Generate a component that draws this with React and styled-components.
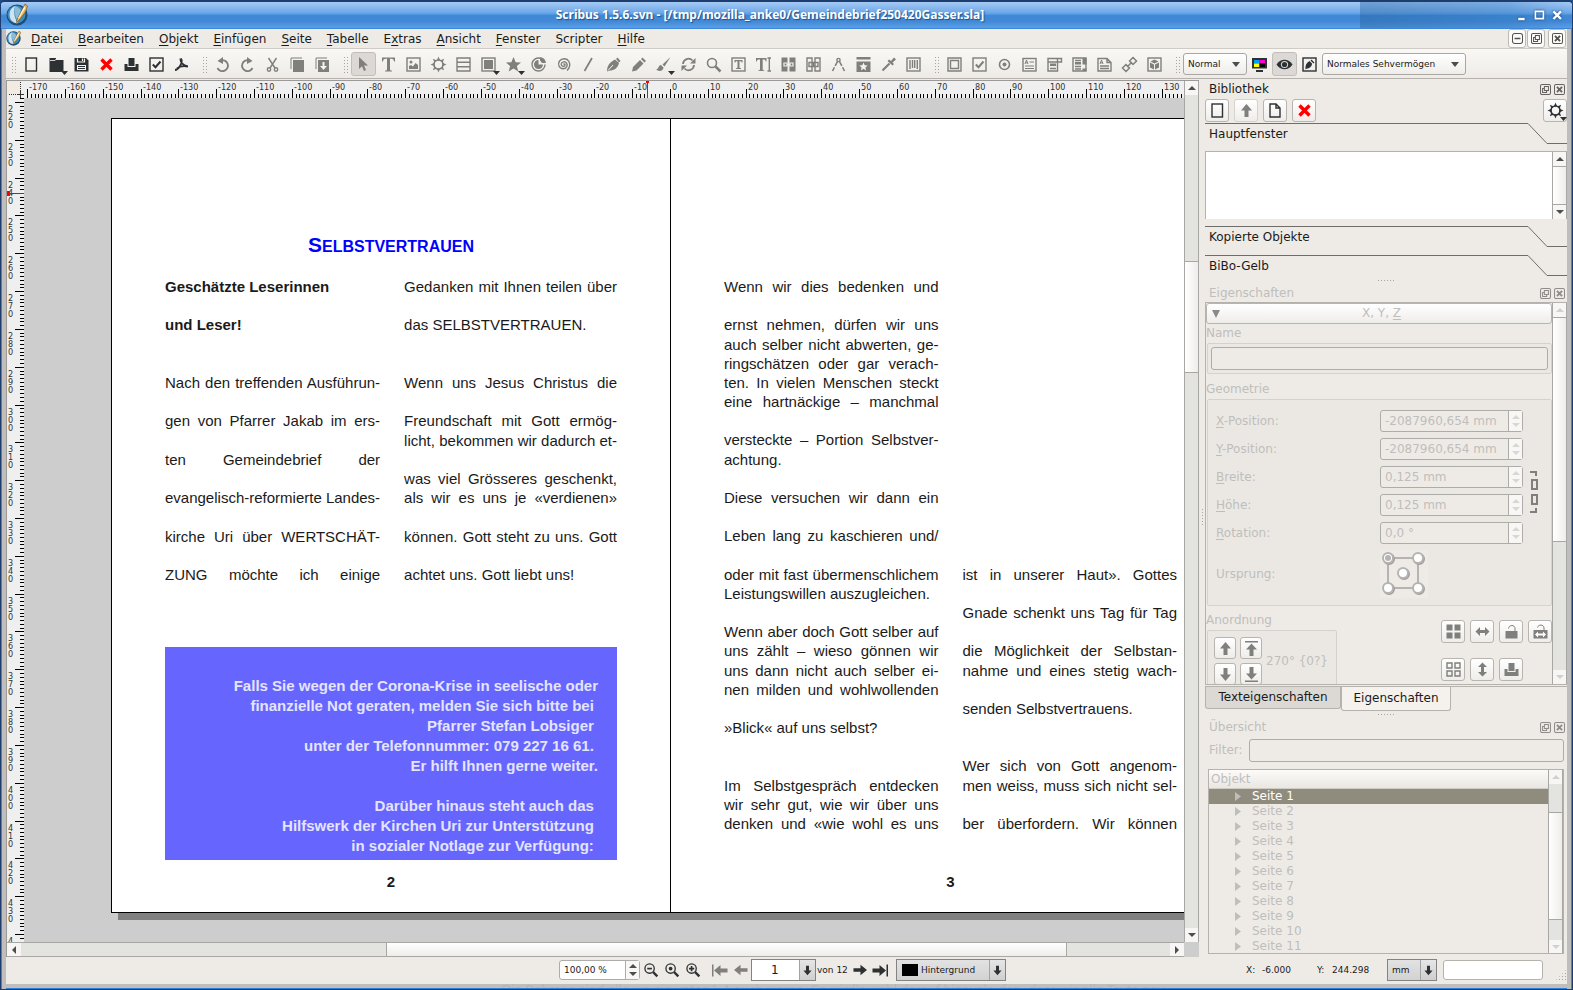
import React, { useLayoutEffect, useRef, useState } from 'react'
import styled, { createGlobalStyle, css } from 'styled-components'

const GlobalStyle = createGlobalStyle`
  * { box-sizing: border-box; }
  body { margin: 0; background: #1d4f8c; }
  button, input, select { font: inherit; color: inherit; margin: 0; padding: 0; }
  p, h1, h2, ul { margin: 0; padding: 0; font-weight: normal; }
`

/* ---------- icons ---------- */

const DARK = '#2e3133'
const GRAY = '#7f7f7c'

const s = { fill: 'none', stroke: 'currentColor', strokeWidth: 1.4 }
const f = { fill: 'currentColor', stroke: 'none' }
const w = { fill: 'none', stroke: '#f5f3f0', strokeWidth: 1.2 }

const gearTeeth = [0, 45, 90, 135, 180, 225, 270, 315].map(a => (
  <path key={a} {...f} d="M5.8 3.500 7.500-.500 9.200 3.500z" transform={`rotate(${a} 7.5 7.5)`} />
))

const SHAPES = {
  doc: <rect x="2" y="1" width="10.500" height="13" {...s} />,
  page: <path {...s} d="M2 1h6l4 4v9H2zM8 1v4h4" />,
  folder: <><path {...f} d="M0.500 1h6.500v2h7.500v12H0.500z" /><path {...w} strokeWidth=".8" d="M1 3.500h5l1-1.500M8 1.500h5.500" /></>,
  save: <><path {...f} d="M0.500 1h11.500l2.500 2.500V14.500H0.500z" /><path {...w} d="M3.500 1.500v3.500h7V1.500M8.500 1.500V4" /><path fill="#f5f3f0" d="M3 8h9v5H3z" /><path {...s} strokeWidth="1" d="M4 9.500h7M4 11.500h7" /></>,
  cross: <path fill="none" stroke="#fe0000" strokeWidth="3.4" d="m2.500 2.500 10 10m0-10-10 10" />,
  print: <path {...f} d="M4.500 1h6v8h-6zM0.500 7h3v3h8V7h3v7h-14z" />,
  check: <><rect x="1" y="1" width="13" height="13" {...s} /><path {...s} strokeWidth="2" d="m3.800 7.500 2.700 2.700 5-5.700" /></>,
  pdf: <path {...s} strokeWidth="1.8" d="M7 1.500c1.500 2 .5 5-1 7.500S2.500 13 1 13M6.500 1.500c-.5 3 2 7.500 7.500 7.800M3 11.500c2-1.700 6-2.700 10.500-2" />,
  undo: <><path {...s} strokeWidth="1.800" d="M2.500 11a5.500 5.500 0 1 0 3-7.500" /><path {...f} d="M8 0v7L2.500 4z" /></>,
  redo: <><path {...s} strokeWidth="1.800" d="M12.500 11a5.500 5.500 0 1 1-3-7.500" /><path {...f} d="M7 0v7l5.500-3z" /></>,
  cut: <><path {...s} d="M3.500 1 10 11M11.500 1 5 11" /><circle cx="4" cy="12.500" r="1.700" {...s} /><circle cx="11" cy="12.500" r="1.700" {...s} /></>,
  copy: <><path {...s} strokeWidth="1" d="M1 12V1H12" /><path {...f} d="M3 3h11v12H3z" /></>,
  paste: <><path {...s} strokeWidth="1" d="M1 12V1H12" /><path {...f} d="M3 3h11v12H3z" /><path fill="#f5f3f0" d="M7.500 5h2v4h2.500l-3.500 4-3.500-4h2.500z" /></>,
  arrow: <path {...f} d="M3 0v12l3-2.700L8 14l2-1-2-4.500h4z" />,
  text: <path {...f} d="M1 0.500h13V4.500h-1c-.3-2-1-2.700-3-2.700H9V12c0 1.200.4 1.500 2 1.700v.8H4v-.8c1.600-.2 2-.5 2-1.700V1.800H5c-2 0-2.700.7-3 2.700H1z" />,
  image: <><rect x="1" y="1" width="13" height="13" {...s} /><circle cx="5" cy="5" r="1.500" {...f} /><path {...f} d="M3 12V9l2-1 2 1.500L9.500 6 12 8v4z" /></>,
  gear: <><circle cx="7.500" cy="7.500" r="4.500" {...s} strokeWidth="1.600" />{gearTeeth}</>,
  table: <path {...s} d="M1 1h13v13H1zM1 5.300h13M1 9.700h13" />,
  shape: <><rect x="1" y="1" width="13" height="13" {...s} /><path {...f} d="M3 3h9v9H3z" /></>,
  star: <path {...f} d="m7.500 0 2.200 5.200 5.300.3-4.100 3.500 1.400 5.500-4.800-3-4.800 3L4.100 9 0 5.500l5.300-.3z" />,
  arc: <><path {...s} d="M9 1.200a6.500 6.500 0 1 0 5 6.300" /><path {...f} d="M7.500 3v4.500H12A4.500 4.500 0 1 1 7.500 3zM9 0a7 7 0 0 1 6 6H11L9 3.500z" /></>,
  spiral: <path {...s} d="M7.500 7.500c1-1.200 2 .2 1.300 1.200-1.200 1.500-3.800.3-3.600-1.500C5.500 4.500 9 4 10.500 6c1.800 2.700-.3 5.700-3.300 5.700C3 11.500 1.500 7 3.500 4 6 .8 11 1 13 4.500c1.300 3 .7 6.500-2 9" />,
  line: <path {...s} strokeWidth="1.700" d="M3.500 14 11 1" />,
  pen: <><path {...f} d="M1 14.500c0-5 2-9 8-12l4 3.500c-1 5-5 7.500-9 7.500zM10 2l1.500-1.500L14.500 4 13 5.500z" /><path {...w} strokeWidth="1" d="m2 13.500 5-5.500" /></>,
  pencil: <><path {...f} d="M1 14.500 2 10l7-7 3.500 3.500-7 7zM10 2l1.500-1.500L15 4l-1.500 1.500z" /></>,
  brush: <><path {...f} d="M0 12.500C3 12 2 8.500 5 8l2.500 2.500C7.500 14 3 15 0 12.500zM6.500 7.500 14.500 0 8.500 9.500z" /></>,
  rotate: <><path {...s} strokeWidth="1.800" d="M2 7a5.500 5.500 0 0 1 9.500-3.500M13 8a5.500 5.500 0 0 1-9.500 3.500" /><path {...f} d="M14.500 1v5.500H9zM.500 14V8.500H6z" /></>,
  zoom: <><circle cx="6" cy="6" r="4.500" {...s} strokeWidth="1.600" /><path {...s} strokeWidth="2.500" d="m9.500 9.500 5 5" /></>,
  zoomOut: <><circle cx="6" cy="6" r="5" {...s} /><path {...s} strokeWidth="1.800" d="M3.500 6h5" /><path {...s} strokeWidth="2.500" d="m9.800 9.800 4.500 4.500" /></>,
  zoomFit: <><circle cx="6" cy="6" r="5" {...s} /><circle cx="6" cy="6" r="2" {...f} /><path {...s} strokeWidth="2.500" d="m9.800 9.800 4.500 4.500" /></>,
  zoomIn: <><circle cx="6" cy="6" r="5" {...s} /><path {...s} strokeWidth="1.800" d="M3.200 6h5.600M6 3.200v5.600" /><path {...s} strokeWidth="2.500" d="m9.800 9.800 4.500 4.500" /></>,
  textFrame: <><rect x="1" y="1" width="13" height="13" {...s} /><path {...f} d="M3.500 3h8v2.500h-.8L10 4.300H8.500v6.500l1.500.5v.7H5v-.7l1.500-.5V4.300H5l-.7 1.200h-.8z" /></>,
  textEdit: <><path {...f} d="M0 1h10.500v3.500h-.8c-.2-1.500-.7-2-2.200-2h-.8V12c0 .9.300 1.200 1.500 1.300v.7H2.500v-.7c1.200-.1 1.500-.4 1.500-1.300V2.500H3c-1.500 0-2 .5-2.200 2H0z" /><path {...s} d="M11.500 1h3.500M11.500 14h3.500M13.300 1v13" /></>,
  link: <><path {...f} d="M0.500 0.500h6v14h-6zM8.500 0.500h6v14h-6z" /><path {...w} d="M3 6h3v3H3zM9 6h3v3H9zM6 7.500h3" /></>,
  unlink: <path {...s} d="M1 1h5v13H1zM9 1h5v13H9zM3 5.500h9v4H3zM7.500 5v5" />,
  measure: <><circle cx="7.500" cy="3" r="1.600" {...s} /><path {...s} strokeDasharray="5 1.500" strokeWidth="1.600" d="M6.500 4.500 1.500 14M8.500 4.500l5 9.500" /></>,
  copyProps: <><path {...f} d="M0.500 0h14v2.500H0.500zM0.500 4.500h14V15H0.500z" /><path fill="#f5f3f0" d="m7.500 5.500 1.200 2.800 3 .2-2.300 2 .7 3-2.600-1.700-2.600 1.700.7-3-2.300-2 3-.2z" /></>,
  dropper: <><path {...s} strokeWidth="2.200" d="m1.500 13.500 7-7" /><path {...f} d="M6.500 4 8 2.500 10 4l3-3.500 2 2L11.500 5.500l1.500 1.500L11.500 8.500z" /></>,
  barcode: <><rect x="1" y="1" width="13" height="13" {...s} /><path {...s} d="M4 3v9M6.500 3v8M8.700 3v8M11.300 3v9" /></>,
  pushButton: <path {...s} d="M1 1h13v13H1zM3.500 3.500h8v8h-8z" />,
  radio: <><circle cx="7.500" cy="7.500" r="5" {...s} strokeWidth="1.600" /><circle cx="7.500" cy="7.500" r="2" {...f} /></>,
  textField: <><rect x="1" y="1.500" width="13" height="12.500" {...s} /><path {...s} d="M7.500 5h4.500M3 9h9M3 11.500h9M3 7l1.500-4L6 7M3.700 5.800h1.800" strokeWidth="1" /></>,
  combo: <><path {...s} d="M1 1.500h13.500v3.500H1zM1 5v9h9.500V5M10.500 1.500V5" /><path {...f} d="M3 6.500h6v2.500H3z" /><path {...s} d="M3 11.500h6" /></>,
  listBox: <><path {...s} d="M1 1h13v13H1zM3 3.500h6M3 9.500h6M3 12h6" /><path {...f} d="M3 5h6v2.500H3zM10.500 1H14.500v6.500h-4zM10.500 11.500h4V14h-4z" /></>,
  annotation: <><path {...s} d="M1 1.500h9l4 4V14H1zM10 1.500v4h4M3 9h9M3 11.500h9" /><path {...s} strokeWidth="1" d="M3 7l1.500-4L6 7M3.700 5.800h1.800" /></>,
  chain: <path {...s} strokeWidth="1.500" d="M7.500 4 11 .500l3.500 3.500L11 7.500zM.500 11 4 7.500 7.500 11 4 14.500zM5 10l5-5" />,
  cube: <><rect x="1" y="1" width="13" height="13" {...s} /><path {...f} d="m7.500 2.500 4 2-4 2-4-2zM3 5.500l4 2v5l-4-2zM12 5.500l-4 2v5l4-2z" /></>,
  cmyk: <><path {...f} d="M0 1h15v10.500H0zM4 13h7v2H4z" /><path fill="#00a0f0" d="M2 3h5.500v3.500H2z" /><path fill="#f0c" d="M7.500 3H13v3.500H7.500z" /><path fill="#ff0" d="M2 6.500h5.500V10H2z" /><path fill="#000" d="M7.500 6.500H13V10H7.500z" /></>,
  eye: <><path {...f} d="M-.5 7.500C3 1.200 12 1.200 15.500 7.500 12 13.800 3 13.800-.5 7.500z" /><circle cx="7.500" cy="7.500" r="3.600" fill="#dcd8d5" /><circle cx="7.500" cy="7.500" r="2.600" {...f} /></>,
  editMode: <><rect x="1" y="1" width="13" height="13" {...s} /><path {...f} d="M3.500 12.500c-.5-4 1-7 4-8.500l2.500 2.500c0 3.500-3 5-5 5zM8.500 3.500l1-1 3 3-1 1z" /></>,
  up: <path {...f} d="M7.500 1 13 7.500H9.500V14h-4V7.500H2z" />,
  down: <path {...f} d="M7.500 14 2 7.500h3.500V1h4v6.500H13z" />,
  toTop: <path {...f} d="M1 0h13v1.500H1zM7.500 2.500 13 8.500H9.500V15h-4V8.500H2z" />,
  toBottom: <path {...f} d="M1 13.500h13V15H1zM7.500 12.500 2 6.500h3.500V0h4v6.500H13z" />,
  left: <path {...f} d="M0 7.500 7 2v3.500h7.500v4H7V13z" />,
  right: <path {...f} d="M15 7.500 8 2v3.500H.500v4H8V13z" />,
  first: <path {...f} d="M0 1.500h1.500v12H0zM2 7.500 8.500 2v3.500h7v4h-7V13z" />,
  last: <path {...f} d="M13.500 1.500H15v12h-1.500zM13 7.500 6.500 2v3.500h-7v4h7V13z" />,
  group: <path {...f} d="M.500.500h6v6h-6zM8.500.500h6v6h-6zM.500 8.500h6v6h-6zM8.500 8.500h6v6h-6z" />,
  ungroup: <path {...s} d="M1 1h5v5H1zM9 1h5v5H9zM1 9h5v5H1zM9 9h5v5H9z" />,
  flipH: <path {...f} d="M.500 7.500 5 3v3h5V3l4.500 4.500L10 12V9H5v3z" />,
  flipV: <path {...f} d="M7.500.500 12 5H9v5h3l-4.500 4.500L3 10h3V5H3z" />,
  lock: <><path {...f} d="M1.500 7h12v7.500h-12z" /><path {...s} strokeWidth="1" d="M4.500 4.500C5 .500 11 .500 11 4.500V7" /></>,
  lockSize: <><path {...f} d="M0.500 6h14v8.500h-14z" /><path {...s} strokeWidth="1" d="M4.500 3.500C5 .200 11 .200 11 4V6" /><path fill="#fff" d="m2 10.500 3-3v2h5v-2l3 3-3 3v-2H5v2z" /></>,
  float: <><rect x=".700" y=".700" width="13.600" height="13.600" rx="2" {...s} /><path {...s} d="M6 3.500h5.500V9H6zM9 9v2.500H3.500V6H6" /></>,
  close: <><rect x=".700" y=".700" width="13.600" height="13.600" rx="2" {...s} /><path {...s} strokeWidth="2.600" d="m4 4 7 7m0-7-7 7" /></>,
  shade: <><rect x=".700" y=".700" width="13.600" height="13.600" rx="3" {...s} /><path {...s} strokeWidth="2" d="M3.500 7.500h8" /></>,
  winMin: <path fill="none" stroke="#fff" strokeWidth="3" d="M4 12.500h8" />,
  winMax: <path fill="none" stroke="#fff" strokeWidth="2" d="M3 3h10v9H3z" />,
  winClose: <path fill="none" stroke="#fff" strokeWidth="3" d="m3 3 9.500 9.500m0-9.500L3 12.500" />,
}

const IconSvg = styled.svg`
  display: block;
  overflow: visible;
  flex: none;
`

const Icon = ({ name, size = 15, drop }) => (
  <IconSvg width={size} height={size} viewBox="0 0 15 15" aria-hidden="true">
    {SHAPES[name]}
    {drop && <path fill={DARK} d="M12 14h7l-3.500 4z" />}
  </IconSvg>
)

const AppIcon = ({ size }) => (
  <IconSvg width={size} height={size} viewBox="0 0 22 22" aria-hidden="true">
    <circle cx="11" cy="11" r="10.500" fill="#1c4d74" />
    <circle cx="10.500" cy="10.500" r="9" fill="#3c8cc0" />
    <path fill="#cfe3ef" d="M9 2C4 4 2 10 5 16c2 2.500 5 3.500 7 3C9 15 7 9 9 2z" />
    <path fill="#8dbcd8" d="M9 2c3 1 5 2 6 5l-4 9c-2-4-3-9-2-14z" />
    <path fill="#e7b45a" stroke="#7a5520" strokeWidth=".7" d="M19 0l2.500 2-2 6-7 9-2 1.500.5-3L16 6z" />
    <path fill="#fff0c8" d="M18.500 2 12 14l1 .5L19.500 4z" />
  </IconSvg>
)

/* ---------- window frame ---------- */

const Frame = styled.div`
  height: 100vh;
  min-height: 600px;
  display: flex;
  flex-direction: column;
  overflow: hidden;
  border: 1px solid #1d3d6e;
  border-top-width: 2px;
  border-radius: 5px 5px 0 0;
  background: #bfbebd;
  font: 12px/15px 'DejaVu Sans', sans-serif;
  color: #1a1a1a;
`

const TitleBar = styled.header`
  height: 27px;
  flex: none;
  display: flex;
  align-items: center;
  padding: 0 6px 0 5px;
  color: #fff;
  border-bottom: 1px solid #3b86d6;
  background:
    linear-gradient(90deg, #24609c66, #2f74b955 70%, transparent) right / 212px 100% no-repeat,
    linear-gradient(#a6caf4, #6fa9ea 40%, #4a94e0 50%, #3e88d6 52%, #4289d6 75%, #5c9fe8);

  h1 {
    flex: 1;
    text-align: center;
    font: bold 12px/20px 'Noto Sans', sans-serif;
    text-shadow: 1px 1px 1px #1f4f8a;
  }
`

const WindowButton = styled.button`
  width: 18px;
  height: 18px;
  display: grid;
  place-items: center;
  border: 0;
  background: none;
  filter: drop-shadow(0 0 1px #123c70);
`

const Inner = styled.div`
  flex: 1;
  min-height: 0;
  display: flex;
  flex-direction: column;
  border-left: 1px solid #3b86d6;
  border-right: 1px solid #3b86d6;
  padding: 0 4px;
`

const Content = styled.div`
  flex: 1;
  min-height: 0;
  display: flex;
  flex-direction: column;
  background: #eeebe6;
`

const BottomEdge = styled.div`
  height: 5px;
  flex: none;
  overflow: hidden;
  border-bottom: 1px solid #2f80dc;
  padding-left: 496px;
  white-space: nowrap;
  font-size: 12px;
  line-height: 12px;
  color: #b4b4b4;
`

/* ---------- menu bar ---------- */

const MenuBar = styled.nav`
  height: 20px;
  flex: none;
  display: flex;
  align-items: center;
  gap: 15px;
  padding-right: 1px;
  border-bottom: 1px solid #cfccc7;

  > svg { margin-right: -5px; }

  button {
    border: 0;
    background: none;
    line-height: 18px;
  }
`

const MdiButtons = styled.div`
  margin-left: auto;
  display: flex;
  gap: 1px;
  color: #55534f;

  button {
    width: 18px;
    height: 19px;
    display: grid;
    place-items: center;
    border: 1px solid #bcb9b5;
    border-radius: 3px;
    background: #fcfbfa;
  }
  button:last-child { margin-left: 2px; }
`

const U = styled.span`
  text-decoration: underline;
  text-underline-offset: 2px;
`

/* ---------- tool bar ---------- */

const ToolBar = styled.div`
  height: 30px;
  flex: none;
  display: flex;
  align-items: center;
  padding-top: 1px;
  background: linear-gradient(#faf8f5, #eeebe6);
  border-bottom: 1px solid #b5b2ae;
`

const dots = css`
  background-image: radial-gradient(circle, #a8a5a1 40%, transparent 45%);
  background-size: 3px 3px;
`

const Handle = styled.span`
  width: 5px;
  height: 17px;
  flex: none;
  margin: 0 3px 0 ${p => (p.$first ? 5 : 8)}px;
  ${dots}
`

const ToolButton = styled.button`
  width: 25px;
  height: 24px;
  flex: none;
  display: grid;
  place-items: center;
  border: 1px solid ${p => (p.$on ? '#c2bfbb' : 'transparent')};
  border-radius: 3px;
  background: ${p => (p.$on ? '#dcd8d5' : 'none')};
  color: ${p => (p.$dark ? DARK : GRAY)};
`

const ComboBox = styled.span`
  display: grid;
  flex: none;
  width: ${p => p.$width}px;
  height: 22px;
  border: 1px solid #aaa7a3;
  border-radius: 3px;
  background: linear-gradient(#fff, #efedea);
  font-size: 9px;
  align-items: center;

  select, svg { grid-area: 1 / 1; }
  select {
    width: 100%;
    height: 100%;
    padding-left: 4px;
    border: 0;
    background: none;
    appearance: none;
  }
  svg {
    justify-self: end;
    margin-right: 6px;
    pointer-events: none;
  }
`

const Combo = ({ label, value, width }) => (
  <ComboBox $width={width}>
    <select aria-label={label} defaultValue={value}>
      <option>{value}</option>
    </select>
    <svg width="8" height="5"><path d="M0 0h8L4 5z" fill="#4d4d4a" /></svg>
  </ComboBox>
)

/* ---------- scroll bars ---------- */

const Track = styled.div`
  display: flex;
  flex-direction: ${p => (p.$row ? 'row' : 'column')};
  min-width: 0;
  min-height: 0;
  background: #e3e3df;
  border: solid #a9a7a4;
  border-width: ${p => (p.$row ? '1px 0' : '0 1px')};
`

const TrackButton = styled.button`
  flex: 0 0 14px;
  display: grid;
  place-items: center;
  border: 0 solid #b5b3b0;
  background: #f7f6f4;
`

const Thumb = styled.div`
  flex: ${p => p.$size} 0 0;
  border: solid #a9a7a4;
  border-width: ${p => (p.$row ? '0 1px' : '1px 0')};
  background: ${p => (p.$row ? 'linear-gradient(#fff, #efedeb)' : 'linear-gradient(90deg, #fff, #efedeb)')};
`

const Groove = styled.div`
  flex: ${p => p.$size} 0 0;
`

const TRI = {
  up: 'M0 6 4 2l4 4z',
  down: 'M0 2h8L4 6z',
  left: 'M6 0v8L2 4z',
  right: 'M2 0v8l4-4z',
}

const Tri = ({ dir, color = '#4d4d4a' }) => (
  <svg width="8" height="8" aria-hidden="true"><path d={TRI[dir]} fill={color} /></svg>
)

const ScrollBar = ({ row, before, size, after, color, className }) => (
  <Track $row={row} className={className}>
    <TrackButton aria-label="Zurück"><Tri dir={row ? 'left' : 'up'} color={color} /></TrackButton>
    <Groove $size={before} />
    <Thumb $row={row} $size={size} />
    <Groove $size={after} />
    <TrackButton aria-label="Weiter"><Tri dir={row ? 'right' : 'down'} color={color} /></TrackButton>
  </Track>
)

/* ---------- canvas ---------- */

const Body = styled.div`
  flex: 1;
  min-height: 0;
  display: flex;
`

const CanvasArea = styled.main`
  flex: 1;
  min-width: 0;
  margin-top: 1px;
  display: grid;
  grid-template: 17px minmax(0, 1fr) 15px / 17px minmax(0, 1fr) 15px;
  border: solid #9c9a98;
  border-width: 1px 0 0 1px;
  background: #cdcdcd;

  .vertical { grid-area: 1 / 3 / 3 / 4; }
  .horizontal { grid-area: 3 / 1 / 4 / 3; }
`

const RulerBox = styled.div`
  min-width: 0;
  min-height: 0;
  overflow: hidden;
  background: #efefef;

  svg {
    display: block;
    width: 100%;
    height: 100%;
    font: 9px 'DejaVu Sans Condensed', 'DejaVu Sans', sans-serif;
    font-stretch: condensed;
  }
`

const STEP = 3.782

// Length of the ruler in pixels, kept in step with the window.
const useLength = side => {
  const ref = useRef(null)
  const [length, setLength] = useState(0)
  useLayoutEffect(() => {
    const measure = () => setLength(ref.current[side])
    measure()
    window.addEventListener('resize', measure)
    return () => window.removeEventListener('resize', measure)
  }, [side])
  return [ref, length]
}

const ticksFor = (zero, first, length) => {
  const ticks = []
  for (let n = first; zero + n * STEP < length; n++) ticks.push([n, Math.round(zero + n * STEP)])
  return ticks
}

const Corner = () => (
  <RulerBox>
    <svg>
      <rect width="13" height="13" fill="#f1ebe2" />
      <path d="M2 13.500h12M13.500 1v16" stroke="#333" strokeDasharray="1 1" />
      <path d="M10 13.500h7M13.500 10v7" stroke="#333" />
    </svg>
  </RulerBox>
)

const HRuler = () => {
  const [ref, length] = useLength('clientWidth')
  const ticks = ticksFor(646, -170, length)
  return (
    <RulerBox ref={ref}>
      <svg>
        {ticks.map(([n, x]) => <rect key={n} x={x} y={n % 10 ? 13 : 8} width="1" height="9" />)}
        {ticks.filter(([n]) => n % 10 === 0).map(([n, x]) => (
          <text key={n} x={x + 2} y="9" fill="#333">{n}</text>
        ))}
        <path d="M622 0h3v2h-1v15h-1V2h-1z" fill="#f00" />
      </svg>
    </RulerBox>
  )
}

const VRuler = () => {
  const [ref, length] = useLength('clientHeight')
  const ticks = ticksFor(4, -1, length)
  return (
    <RulerBox ref={ref}>
      <svg>
        {ticks.map(([n, y]) => <rect key={n} x={n % 10 ? 13 : 8} y={y} width="9" height="1" />)}
        {ticks.filter(([n]) => n % 10 === 0).map(([n, y]) =>
          String(220 + n).split('').map((d, i) => [d, y + 10 + i * 8]).filter(([, dy]) => dy < length + 4).map(([d, dy]) => (
            <text key={dy} x="1" y={dy} fill="#333">{d}</text>
          ))
        )}
        <path d="M0 93h3v2h14v1H3v2H0z" fill="#f00" />
      </svg>
    </RulerBox>
  )
}

const Viewport = styled.div`
  min-width: 0;
  min-height: 0;
  overflow: hidden;
  padding: 20px 0 0 87px;
`

const Spread = styled.div`
  width: max-content;
  display: flex;
  border: 1px solid #000;
  background: #fff;
  box-shadow: 7px 7px 0 #808080;
`

const Sheet = styled.article`
  width: 558px;
  height: 793px;
  padding: 114px 53px 0;
  font: 15px/19px 'Liberation Sans', Arial, sans-serif;
  color: #1a1a1a;

  & + & {
    border-left: 1px solid #000;
    padding-right: 51px;
  }
`

const Heading = styled.h2`
  height: 24px;
  margin-bottom: 20px;
  text-align: center;
  text-transform: uppercase;
  font-size: 16px;
  font-weight: bold;
  line-height: 24px;
  color: #0000fe;

  &::first-letter { font-size: 21px; }
`

const Columns = styled.div`
  display: grid;
  grid-template-columns: 1fr 1fr;
  column-gap: 24px;
  height: ${p => p.$height}px;
`

const TextFrame = styled.div`
  display: grid;
  grid-template-rows: repeat(${p => p.$rows}, 1fr);
  align-items: center;
`

const Line = styled.p`
  white-space: nowrap;
  text-align: justify;
  text-align-last: ${p => (p.$last ? 'left' : 'justify')};
  font-weight: ${p => (p.$bold ? 'bold' : 'normal')};
`

// A trailing | ends a paragraph (no justification), a leading * sets it bold.
const TextColumn = ({ rows, lines }) => (
  <TextFrame $rows={rows}>
    {lines.map((t, i) => (
      <Line key={i} $last={t.endsWith('|')} $bold={t.startsWith('*')}>
        {t.replace(/^\*|\|$/g, '')}
      </Line>
    ))}
  </TextFrame>
)

const Notice = styled.div`
  height: 213px;
  margin: 63px 0 12px;
  padding: 29px 19px 0 0;
  background: #6666ff;
  color: #e4e4ff;
  font-weight: bold;
  line-height: 20px;
  white-space: pre;
  text-align: right;
`

const Folio = styled.p`
  text-align: center;
  font-weight: bold;
  line-height: 20px;
  margin-top: ${p => p.$gap || 0}px;
`

const LEFT_1 = ['*Geschätzte Leserinnen|', '', '*und Leser!|', '', '', 'Nach den treffenden Ausführun-', '',
  'gen von Pfarrer Jakab im ers-', '', 'ten Gemeindebrief der', '', 'evangelisch-reformierte Landes-', '',
  'kirche Uri über WERTSCHÄT-', '', 'ZUNG möchte ich einige']

const LEFT_2 = ['Gedanken mit Ihnen teilen über', '', 'das SELBSTVERTRAUEN.|', '', '', 'Wenn uns Jesus Christus die', '',
  'Freundschaft mit Gott ermög-', 'licht, bekommen wir dadurch et-', '', 'was viel Grösseres geschenkt,',
  'als wir es uns je «verdienen»', '', 'können. Gott steht zu uns. Gott', '', 'achtet uns. Gott liebt uns!|']

const RIGHT_1 = ['Wenn wir dies bedenken und', '', 'ernst nehmen, dürfen wir uns', 'auch selber nicht abwerten, ge-',
  'ringschätzen oder gar verach-', 'ten. In vielen Menschen steckt', 'eine hartnäckige – manchmal', '',
  'versteckte – Portion Selbstver-', 'achtung.|', '', 'Diese versuchen wir dann ein', '',
  'Leben lang zu kaschieren und/', '', 'oder mit fast übermenschlichem', 'Leistungswillen auszugleichen.|', '',
  'Wenn aber doch Gott selber auf', 'uns zählt – wieso gönnen wir', 'uns dann nicht auch selber ei-',
  'nen milden und wohlwollenden', '', '»Blick« auf uns selbst?|', '', '', 'Im Selbstgespräch entdecken',
  'wir sehr gut, wie wir über uns', 'denken und «wie wohl es uns']

const RIGHT_2 = [...Array(15).fill(''), 'ist in unserer Haut». Gottes', '', 'Gnade schenkt uns Tag für Tag', '',
  'die Möglichkeit der Selbstan-', 'nahme und eines stetig wach-', '', 'senden Selbstvertrauens.|', '', '',
  'Wer sich von Gott angenom-', 'men weiss, muss sich nicht sel-', '', 'ber überfordern. Wir können']

const NOTICE = `Falls Sie wegen der Corona-Krise in seelische oder
finanzielle Not geraten, melden Sie sich bitte bei${' '}
Pfarrer Stefan Lobsiger${' '}
unter der Telefonnummer: 079 227 16 61.${' '}
Er hilft Ihnen gerne weiter.

Darüber hinaus steht auch das${' '}
Hilfswerk der Kirchen Uri zur Unterstützung${' '}
in sozialer Notlage zur Verfügung:${' '}`

/* ---------- docks ---------- */

const Dock = styled.aside`
  width: 368px;
  flex: none;
  display: flex;
  padding: 1px 0 3px;
`

const Splitter = styled.div`
  width: 6px;
  display: grid;
  place-items: center;

  span { width: 3px; height: 18px; ${dots} }
`

const DockColumn = styled.div`
  flex: 1;
  min-width: 0;
  display: flex;
  flex-direction: column;
`

const HSplitter = styled.div`
  height: 8px;
  flex: none;
  display: grid;
  place-items: center;

  span { width: 18px; height: 3px; ${dots} }
`

const DockTitle = styled.div`
  height: 18px;
  flex: none;
  display: flex;
  align-items: center;
  gap: 3px;
  padding: 1px 2px 0 4px;
  color: ${p => (p.$off ? '#bfbebc' : 'inherit')};

  h2 { flex: 1; font-size: 12px; }
  button {
    border: 0;
    background: none;
    color: ${p => (p.$off ? '#8f8d8a' : '#666461')};
  }
`

const Title = ({ children, off }) => (
  <DockTitle $off={off}>
    <h2>{children}</h2>
    <button aria-label="Lösen"><Icon name="float" size={11} /></button>
    <button aria-label="Schließen"><Icon name="close" size={11} /></button>
  </DockTitle>
)

const ButtonRow = styled.div`
  height: 25px;
  flex: none;
  display: flex;
  gap: 5px;
  padding-top: 1px;

  > :last-child { margin-left: auto; }
`

const PushButton = styled.button`
  width: 24px;
  height: 23px;
  display: grid;
  place-items: center;
  border: 1px solid ${p => (p.$light ? '#d6d3cf' : '#b8b5b1')};
  border-radius: 3px;
  background: linear-gradient(#fff, #efedea);
  color: ${p => (p.$dark ? DARK : GRAY)};
`

const TabHead = styled.div`
  height: 21px;
  flex: none;
  display: flex;
  margin-top: ${p => p.$gap || 0}px;

  span {
    flex: 1;
    padding-left: 4px;
    border-top: 1px solid #6f6d6a;
    line-height: 20px;
  }
`

const LibraryTab = ({ children, gap }) => (
  <TabHead $gap={gap}>
    <span>{children}</span>
    <svg width="39" height="21" fill="none" stroke="#6f6d6a"><path d="M0 .500 19 20.500h20" /></svg>
  </TabHead>
)

const LibraryList = styled.div`
  height: 68px;
  flex: none;
  margin-top: 7px;
  display: grid;
  grid-template-columns: 1fr 15px;
  background: #fff;
  border: solid #b5b2ae;
  border-width: 1px 0 0 1px;
`

const Panel = styled.section`
  height: 383px;
  flex: none;
  display: grid;
  grid-template-columns: minmax(0, 1fr) 15px;
  overflow: hidden;
  border: 1px solid #b5b2ae;
  border-right: 0;
  color: #bfbebc;
`

const PanelBody = styled.div`
  overflow: hidden;
`

const Fold = styled.button`
  width: 100%;
  height: 21px;
  display: flex;
  align-items: center;
  padding: 0 8px 0 5px;
  border: 1px solid #b8b5b1;
  border-radius: 3px;
  background: linear-gradient(#fff, #efedea);

  span { flex: 1; }
  span span { flex: none; }
`

const GroupLabel = styled.p`
  display: block;
  line-height: 18px;
  margin-top: ${p => p.$gap || 0}px;
`

const Group = styled.div`
  margin: 1px 0 0 1px;
  border: 1px solid #d5d2ce;
  border-radius: 2px;
  background: #ebe8e3;
  padding: ${p => p.$pad || 0}px;
`

const TextInput = styled.input`
  width: 100%;
  height: 23px;
  display: block;
  border: 1px solid #aeaca9;
  border-radius: 3px;
  background: #eeebe6;
`

const Geometry = styled.div`
  display: grid;
  grid-template-columns: 164px 143px 1fr;
  grid-template-rows: repeat(5, 28px) 48px;
  padding: 10px 0 7px 8px;

  label { grid-column: 1; line-height: 22px; }
`

const OriginLabel = styled.span`
  grid-area: 6 / 1;
  align-self: center;
`

const Spin = styled.span`
  height: ${p => p.$height || 22}px;
  display: grid;
  grid-template-columns: 1fr 14px;
  border: 1px solid #aeaca9;
  border-radius: 3px;
  background: ${p => p.$bg || '#eeebe6'};
  width: ${p => (p.$width ? `${p.$width}px` : 'auto')};

  input {
    min-width: 0;
    padding-left: 4px;
    border: 0;
    background: none;
  }
  > span {
    display: flex;
    flex-direction: column;
    justify-content: center;
    align-items: center;
    border-left: 1px solid #aeaca9;
    background: #f8f7f5;
  }
  button {
    height: 8px;
    border: 0;
    background: none;
    display: grid;
    place-items: center;
  }
`

const SpinBox = ({ id, value, label, color = '#d9d7d4', ...rest }) => (
  <Spin {...rest}>
    <input id={id} aria-label={label} defaultValue={value} />
    <span>
      <button aria-label="Mehr"><Tri dir="up" color={color} /></button>
      <button aria-label="Weniger"><Tri dir="down" color={color} /></button>
    </span>
  </Spin>
)

const ChainIcon = styled.svg`
  grid-area: 3 / 3 / 5 / 4;
  margin: 4px 0 0 7px;
`

const OriginSvg = styled.svg`
  grid-area: 6 / 2;
`

const Arrange = styled.div`
  display: flex;
  justify-content: space-between;
  padding-top: 5px;
`

const ArrangeGroup = styled(Group)`
  width: 130px;
  height: 80px;
  display: grid;
  grid-template-columns: 22px 22px 1fr;
  grid-template-rows: 22px 22px;
  gap: 4px;
  padding: 6px 6px 0;

  > * { width: 22px; height: 22px; }
  > span { grid-area: 1 / 3 / 3 / 4; align-self: center; width: auto; white-space: nowrap; line-height: 22px; }
`

const ArrangeGrid = styled.div`
  display: grid;
  grid-template-columns: repeat(4, 24px);
  grid-auto-rows: 23px;
  gap: 15px 5px;
  padding-top: 9px;
`

const Tabs = styled.div`
  height: 24px;
  flex: none;
  display: flex;
  align-items: flex-start;
  margin-top: 1px;
  border-top: 1px solid #b5b2ae;
`

const Tab = styled.button`
  width: ${p => (p.$on ? 110 : 136)}px;
  height: ${p => (p.$on ? 24 : 22)}px;
  border: 1px solid #b5b2ae;
  border-top: 0;
  border-radius: 0 0 3px 3px;
  background: ${p => (p.$on ? '#f5f2ee' : '#dcd9d5')};
`

const FilterRow = styled.div`
  flex: none;
  display: flex;
  align-items: center;
  padding: 3px 3px 7px 4px;
  color: #bfbebc;

  label { width: 40px; flex: none; }
`

const Tree = styled.div`
  flex: 1;
  min-height: 0;
  margin: 0 3px;
  display: grid;
  grid-template-columns: 1fr 15px;
  overflow: hidden;
  border: 1px solid #b5b2ae;
  color: #bfbebc;
`

const TreeHead = styled.div`
  height: 19px;
  padding-left: 2px;
  line-height: 19px;
  border-bottom: 1px solid #cfccc7;
  background: linear-gradient(#fcfbf9, #eae7e2);
`

const TreeRow = styled.li`
  height: 15px;
  display: flex;
  align-items: center;
  gap: 11px;
  padding-left: 26px;
  list-style: none;
  background: ${p => (p.$on ? '#908c7d' : 'none')};
  color: ${p => (p.$on ? '#fff' : 'inherit')};
`

/* ---------- status bar ---------- */

const StatusBar = styled.footer`
  height: 27px;
  flex: none;
  display: grid;
  grid-template-columns: 1fr auto 1fr;
  align-items: center;
  padding-bottom: 1px;
  font-size: 9px;
`

const StatusGroup = styled.div`
  display: flex;
  align-items: center;
  grid-row: 1;
  grid-column: ${p => p.$col};
  justify-self: ${p => (p.$col === 3 ? 'end' : 'center')};
  margin-right: ${p => (p.$col === 2 ? 8 : 0)}px;
  white-space: nowrap;
`

const StatusButton = styled.button`
  width: 21px;
  height: 22px;
  display: grid;
  place-items: center;
  border: 0;
  background: none;
  color: ${p => (p.$off ? GRAY : DARK)};
`

const FlatCombo = styled.span`
  display: grid;
  grid-template-columns: ${p => (p.$swatch ? '24px' : '0')} 1fr 16px;
  align-items: center;
  width: ${p => p.$width}px;
  height: 22px;
  border: 1px solid #858381;
  background: ${p => (p.$white ? '#fff' : 'linear-gradient(#e2e2e2, #d2d2d2)')};

  i {
    width: 16px;
    height: 12px;
    margin-left: 5px;
    background: #000;
  }
  select {
    grid-area: 1 / 2 / 2 / 4;
    height: 100%;
    min-width: 0;
    border: 0;
    appearance: none;
    background: none;
    padding: 0 16px 0 ${p => (p.$white ? 19 : p.$swatch ? 0 : 4)}px;
    font-size: ${p => (p.$white ? 12 : 9)}px;
  }
  > span {
    grid-area: 1 / 3;
    height: 20px;
    display: grid;
    place-items: center;
    border-left: 1px solid #a5a3a1;
    background: linear-gradient(#e6e6e6, #cfcfcf);
    color: ${DARK};
    pointer-events: none;
  }
`

const StatusCombo = ({ label, value, ...rest }) => (
  <FlatCombo {...rest}>
    {rest.$swatch && <i />}
    <select aria-label={label} defaultValue={value}><option>{value}</option></select>
    <span><Icon name="down" size={11} /></span>
  </FlatCombo>
)

const Cell = styled.span`
  width: ${p => p.$width}px;
  padding-left: ${p => p.$pad || 0}px;
`

const Progress = styled.div`
  width: 100px;
  height: 20px;
  margin: 0 12px 0 6px;
  border: 1px solid #b5b2ae;
  border-radius: 3px;
  background: #fff;
`

const Grip = styled.span`
  width: 12px;
  height: 12px;
  align-self: end;
  clip-path: polygon(100% 0, 100% 100%, 0 100%);
  ${dots}
`

/* ---------- data ---------- */

const MENUS = [['', 'D', 'atei'], ['', 'B', 'earbeiten'], ['', 'O', 'bjekt'], ['', 'E', 'infügen'], ['', 'S', 'eite'],
  ['', 'T', 'abelle'], ['E', 'x', 'tras'], ['', 'A', 'nsicht'], ['', 'F', 'enster'], ['Scripter', '', ''], ['', 'H', 'ilfe']]

const FILE_TOOLS = ['doc', 'folder', 'save', 'cross', 'print', 'check', 'pdf']
const EDIT_TOOLS = ['undo', 'redo', 'cut', 'copy', 'paste']
const DRAW_TOOLS = ['arrow', 'text', 'image', 'gear', 'table', 'shape', 'star', 'arc', 'spiral', 'line', 'pen', 'pencil',
  'brush', 'rotate', 'zoom', 'textFrame', 'textEdit', 'link', 'unlink', 'measure', 'copyProps', 'dropper', 'barcode']
const PDF_TOOLS = ['pushButton', 'check', 'radio', 'textField', 'combo', 'listBox', 'annotation', 'chain', 'cube']
const WITH_MENU = ['folder', 'shape', 'star', 'brush']

const GEOMETRY = [
  ['X', '-Position:', '-2087960,654 mm'],
  ['Y', '-Position:', '-2087960,654 mm'],
  ['B', 'reite:', '0,125 mm'],
  ['H', 'öhe:', '0,125 mm'],
  ['R', 'otation:', '0,0 °'],
]

const ToolGroup = ({ names, dark }) => names.map(n => (
  <ToolButton key={n} $dark={dark} $on={n === 'arrow'} aria-label={n}>
    <Icon name={n} drop={WITH_MENU.includes(n)} />
  </ToolButton>
))

const Origin = () => (
  <OriginSvg width="48" height="48" stroke="#b5b4b2" strokeWidth="2" fill="#fff" aria-hidden="true">
    <rect width="48" height="48" stroke="none" fill="#eeebe6" />
    <path d="M8 8h30v30H8z" fill="none" />
    {[[8, 8], [38, 8], [23, 23], [8, 38], [38, 38]].map(([x, y]) => (
      <g key={`${x}-${y}`}>
        <circle cx={x + 1} cy={y + 1} r="5" stroke="#a09f9d" />
        <circle cx={x} cy={y} r="5" />
      </g>
    ))}
    <circle cx="8" cy="8" r="3" fill="#b5b4b2" stroke="none" />
  </OriginSvg>
)

export default function App() {
  return (
    <>
      <GlobalStyle />
      <Frame>
        <TitleBar>
          <AppIcon size={22} />
          <h1>Scribus 1.5.6.svn - [/tmp/mozilla_anke0/Gemeindebrief250420Gasser.sla]</h1>
          <WindowButton aria-label="Minimieren"><Icon name="winMin" size={12} /></WindowButton>
          <WindowButton aria-label="Maximieren"><Icon name="winMax" size={12} /></WindowButton>
          <WindowButton aria-label="Schließen"><Icon name="winClose" size={12} /></WindowButton>
        </TitleBar>

        <Inner>
          <Content>
            <MenuBar>
              <AppIcon size={15} />
              {MENUS.map(([pre, key, rest]) => (
                <button key={pre + key + rest}>{pre}<U>{key}</U>{rest}</button>
              ))}
              <MdiButtons>
                <button aria-label="Minimieren"><Icon name="shade" size={11} /></button>
                <button aria-label="Wiederherstellen"><Icon name="float" size={11} /></button>
                <button aria-label="Schließen"><Icon name="close" size={11} /></button>
              </MdiButtons>
            </MenuBar>

            <ToolBar>
              <Handle $first />
              <ToolGroup names={FILE_TOOLS} dark />
              <Handle />
              <ToolGroup names={EDIT_TOOLS} />
              <Handle />
              <ToolGroup names={DRAW_TOOLS} />
              <Handle />
              <ToolGroup names={PDF_TOOLS} />
              <Handle />
              <Combo label="Vorschauqualität" value="Normal" width={64} />
              <ToolButton $dark aria-label="Farbmanagement"><Icon name="cmyk" /></ToolButton>
              <ToolButton $dark $on aria-label="Vorschau"><Icon name="eye" /></ToolButton>
              <ToolButton $dark aria-label="Bearbeiten"><Icon name="editMode" /></ToolButton>
              <Combo label="Sehvermögen" value="Normales Sehvermögen" width={144} />
            </ToolBar>

            <Body>
              <CanvasArea>
                <Corner />
                <HRuler />
                <ScrollBar className="vertical" before={166} size={111} after={556} />
                <VRuler />
                <Viewport>
                  <Spread>
                    <Sheet>
                      <Heading>Selbstvertrauen</Heading>
                      <Columns $height={307}>
                        <TextColumn rows={16} lines={LEFT_1} />
                        <TextColumn rows={16} lines={LEFT_2} />
                      </Columns>
                      <Notice>{NOTICE}</Notice>
                      <Folio>2</Folio>
                    </Sheet>
                    <Sheet>
                      <Heading as="div" />
                      <Columns $height={556}>
                        <TextColumn rows={29} lines={RIGHT_1} />
                        <TextColumn rows={29} lines={RIGHT_2} />
                      </Columns>
                      <Folio $gap={39}>3</Folio>
                    </Sheet>
                  </Spread>
                </Viewport>
                <ScrollBar row className="horizontal" before={366} size={680} after={103} />
              </CanvasArea>

              <Dock>
                <Splitter><span /></Splitter>
                <DockColumn>
                  <Title>Bibliothek</Title>
                  <ButtonRow>
                    <PushButton $dark aria-label="Neu"><Icon name="doc" /></PushButton>
                    <PushButton $light aria-label="Nach oben"><Icon name="up" /></PushButton>
                    <PushButton $dark aria-label="Öffnen"><Icon name="page" /></PushButton>
                    <PushButton $dark aria-label="Entfernen"><Icon name="cross" /></PushButton>
                    <PushButton $dark aria-label="Einstellungen"><Icon name="gear" drop /></PushButton>
                  </ButtonRow>
                  <LibraryTab>Hauptfenster</LibraryTab>
                  <LibraryList>
                    <div />
                    <ScrollBar before={0} size={1} after={0} />
                  </LibraryList>
                  <LibraryTab gap={7}>Kopierte Objekte</LibraryTab>
                  <LibraryTab gap={8}>BiBo-Gelb</LibraryTab>
                  <HSplitter><span /></HSplitter>

                  <Title off>Eigenschaften</Title>
                  <Panel>
                    <PanelBody>
                      <Fold>
                        <svg width="8" height="8"><path d="M0 0h8L4 8z" fill="#8b8a88" /></svg>
                        <span>X, Y, <U>Z</U></span>
                      </Fold>
                      <GroupLabel as="label" htmlFor="name">Name</GroupLabel>
                      <Group $pad={3}><TextInput id="name" /></Group>
                      <GroupLabel $gap={6}>Geometrie</GroupLabel>
                      <Group>
                        <Geometry>
                          {GEOMETRY.map(([key, rest, value]) => (
                            <React.Fragment key={key}>
                              <label htmlFor={`geo-${key}`}><U>{key}</U>{rest}</label>
                              <SpinBox id={`geo-${key}`} value={value} />
                            </React.Fragment>
                          ))}
                          <ChainIcon width="9" height="44" fill="none" stroke={GRAY} strokeWidth="2">
                            <path d="M0 2h6v4M2 10h5v9H2zM2 25h5v9H2zM6 38v4H0" />
                          </ChainIcon>
                          <OriginLabel>Ursprung:</OriginLabel>
                          <Origin />
                        </Geometry>
                      </Group>
                      <Arrange>
                        <div>
                          <GroupLabel>Anordnung</GroupLabel>
                          <ArrangeGroup>
                            <PushButton aria-label="Höher"><Icon name="up" /></PushButton>
                            <PushButton aria-label="Ganz nach oben"><Icon name="toTop" /></PushButton>
                            <PushButton aria-label="Tiefer"><Icon name="down" /></PushButton>
                            <PushButton aria-label="Ganz nach unten"><Icon name="toBottom" /></PushButton>
                            <span>270° {'{0?}'}</span>
                          </ArrangeGroup>
                        </div>
                        <ArrangeGrid>
                          {['group', 'flipH', 'lock', 'lockSize', 'ungroup', 'flipV', 'print'].map(n => (
                            <PushButton key={n} aria-label={n}><Icon name={n} /></PushButton>
                          ))}
                        </ArrangeGrid>
                      </Arrange>
                    </PanelBody>
                    <ScrollBar before={0} size={225} after={129} color="#d2d0cd" />
                  </Panel>
                  <Tabs>
                    <Tab>Texteigenschaften</Tab>
                    <Tab $on>Eigenschaften</Tab>
                  </Tabs>
                  <HSplitter><span /></HSplitter>

                  <Title off>Übersicht</Title>
                  <FilterRow>
                    <label htmlFor="filter">Filter:</label>
                    <TextInput id="filter" />
                  </FilterRow>
                  <Tree>
                    <div>
                      <TreeHead>Objekt</TreeHead>
                      <ul>
                        {[...Array(11)].map((_, i) => (
                          <TreeRow key={i} $on={i === 0}>
                            <svg width="6" height="9"><path d="M0 0v9l6-4.500z" fill="#bfbebc" /></svg>
                            Seite {i + 1}
                          </TreeRow>
                        ))}
                      </ul>
                    </div>
                    <ScrollBar before={29} size={108} after={20} color="#d2d0cd" />
                  </Tree>
                </DockColumn>
              </Dock>
            </Body>

            <StatusBar>
              <StatusGroup $col={2}>
                <SpinBox label="Zoom" value="100,00 %" color="#4d4d4a" $width={81} $height={20} $bg="#fff" />
                {['zoomOut', 'zoomFit', 'zoomIn'].map(n => (
                  <StatusButton key={n} aria-label={n}><Icon name={n} size={14} /></StatusButton>
                ))}
                <Cell $width={6} />
                <StatusButton $off aria-label="Erste Seite"><Icon name="first" /></StatusButton>
                <StatusButton $off aria-label="Vorherige Seite"><Icon name="left" size={14} /></StatusButton>
                <StatusCombo label="Seite" value="1" $width={65} $white />
                <Cell $width={33} $pad={1}>von 12</Cell>
                <StatusButton aria-label="Nächste Seite"><Icon name="right" size={14} /></StatusButton>
                <StatusButton aria-label="Letzte Seite"><Icon name="last" /></StatusButton>
                <Cell $width={5} />
                <StatusCombo label="Ebene" value="Hintergrund" $width={110} $swatch />
              </StatusGroup>
              <StatusGroup $col={3}>
                <Cell $width={16}>X:</Cell>
                <Cell $width={55}>-6.000</Cell>
                <Cell $width={15}>Y:</Cell>
                <Cell $width={55}>244.298</Cell>
                <StatusCombo label="Einheit" value="mm" $width={50} />
                <Progress role="progressbar" aria-label="Fortschritt" />
                <Grip />
              </StatusGroup>
            </StatusBar>
          </Content>
          <BottomEdge>Die Rahmen sind alle wo sie unter 1.4 auch waren. So wird&apos;s wohl darauf hinauslaufen, dass wir alle Texte neu</BottomEdge>
        </Inner>
      </Frame>
    </>
  )
}
